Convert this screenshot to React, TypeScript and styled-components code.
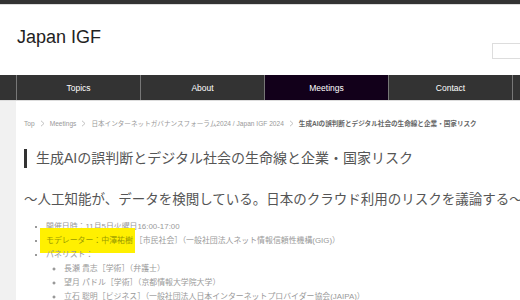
import React from "react";
import styled, { createGlobalStyle } from "styled-components";

const GlobalStyle = createGlobalStyle`
    html, body {
        margin: 0;
        padding: 0;
        background: #fff;
        overflow: hidden;
    }
    body {
        font-family: "Liberation Sans", "Noto Sans CJK JP", sans-serif;
    }
`;

const TopStrip = styled.div`
    height: 4px;
    background: #333;
    border-bottom: 1px solid #ddd;
`;

const Header = styled.header`
    height: 70px;
    display: flex;
    align-items: flex-start;
    justify-content: space-between;
    padding-left: 17px;
`;

const SiteTitle = styled.h1`
    margin: 22px 0 0;
    font-size: 18px;
    font-weight: normal;
    color: #222;
`;

const SearchBox = styled.input`
    margin-top: 38px;
    width: 60px;
    height: 14px;
    border: 1px solid #ddd;
    border-right: none;
    padding: 0;
    margin-right: -33px;
`;

const NavBar = styled.nav`
    display: flex;
    height: 25px;
    background: #333;
    border-bottom: 1px solid #ddd;
    padding-left: 16px;
`;

const NavItem = styled.a<{ $active?: boolean }>`
    flex: 0 0 123px;
    display: flex;
    align-items: center;
    justify-content: center;
    border-left: 1px solid #777;
    background: ${p => (p.$active ? "#12001a" : "transparent")};
    color: #fff;
    font-size: 8.5px;
    text-decoration: none;
`;

const Main = styled.div`
    display: flex;
    min-height: 200px;
`;

const Side = styled.div`
    flex: 0 0 16px;
    background: #f1f1f1;
`;

const Content = styled.div`
    flex: 1;
    padding: 17px 0 0 8px;
    white-space: nowrap;
`;

const Crumbs = styled.div`
    display: flex;
    align-items: center;
    gap: 5px;
    font-size: 6.6px;
    color: #999;
    height: 10px;
`;

const Crumb = styled.span<{ $current?: boolean }>`
    font-weight: ${p => (p.$current ? "bold" : "normal")};
    color: ${p => (p.$current ? "#666" : "#999")};
`;

const Chevron = () => (
    <svg width="5" height="7" viewBox="0 0 5 7">
        <path d="M1 0.8 L4 3.5 L1 6.2" fill="none" stroke="#bbb" strokeWidth="0.9" />
    </svg>
);

const PageTitle = styled.h2`
    margin: 21px 0 0;
    border-left: 3px solid #333;
    padding-left: 9px;
    font-size: 14px;
    line-height: 19px;
    font-weight: normal;
    color: #555;
`;

const SubTitle = styled.p`
    margin: 23px 0 0;
    font-size: 13.5px;
    line-height: 18px;
    color: #555;
`;

const List = styled.ul<{ $nested?: boolean }>`
    margin: ${p => (p.$nested ? "0" : "11px 0 0")};
    padding-left: ${p => (p.$nested ? "18px" : "22px")};
    list-style: ${p => (p.$nested ? "circle" : "disc")};
    font-size: 7.9px;
    line-height: 14px;
    color: #999;
    li::marker {
        color: #777;
    }
`;

const Marker = styled.span`
    display: inline-block;
    background: #fff000;
    padding: 6px 2px 5px 6px;
    margin: -6px 0 -5px -6px;
    line-height: 14px;
    color: #9a9a00;
`;

export default function App() {
    return (
        <>
            <GlobalStyle />
            <TopStrip />
            <Header>
                <SiteTitle>Japan IGF</SiteTitle>
                <SearchBox type="text" />
            </Header>
            <NavBar>
                <NavItem>Topics</NavItem>
                <NavItem>About</NavItem>
                <NavItem $active>Meetings</NavItem>
                <NavItem>Contact</NavItem>
                <NavItem />
            </NavBar>
            <Main>
                <Side />
                <Content>
                    <Crumbs>
                        <Crumb>Top</Crumb>
                        <Chevron />
                        <Crumb>Meetings</Crumb>
                        <Chevron />
                        <Crumb>日本インターネットガバナンスフォーラム2024 / Japan IGF 2024</Crumb>
                        <Chevron />
                        <Crumb $current>生成AIの誤判断とデジタル社会の生命線と企業・国家リスク</Crumb>
                    </Crumbs>
                    <PageTitle>生成AIの誤判断とデジタル社会の生命線と企業・国家リスク</PageTitle>
                    <SubTitle>～人工知能が、データを検閲している。日本のクラウド利用のリスクを議論する～</SubTitle>
                    <List>
                        <li>開催日時：11月5日火曜日16:00-17:00</li>
                        <li>
                            <Marker>モデレーター：中澤祐樹</Marker>［市民社会］（一般社団法人ネット情報信頼性機構(GIG)）
                        </li>
                        <li>
                            パネリスト：
                            <List $nested>
                                <li>長瀬 貴志［学術］（弁護士）</li>
                                <li>望月 パドル［学術］（京都情報大学院大学）</li>
                                <li>立石 聡明［ビジネス］（一般社団法人日本インターネットプロバイダー協会(JAIPA)）</li>
                            </List>
                        </li>
                    </List>
                </Content>
            </Main>
        </>
    );
}
